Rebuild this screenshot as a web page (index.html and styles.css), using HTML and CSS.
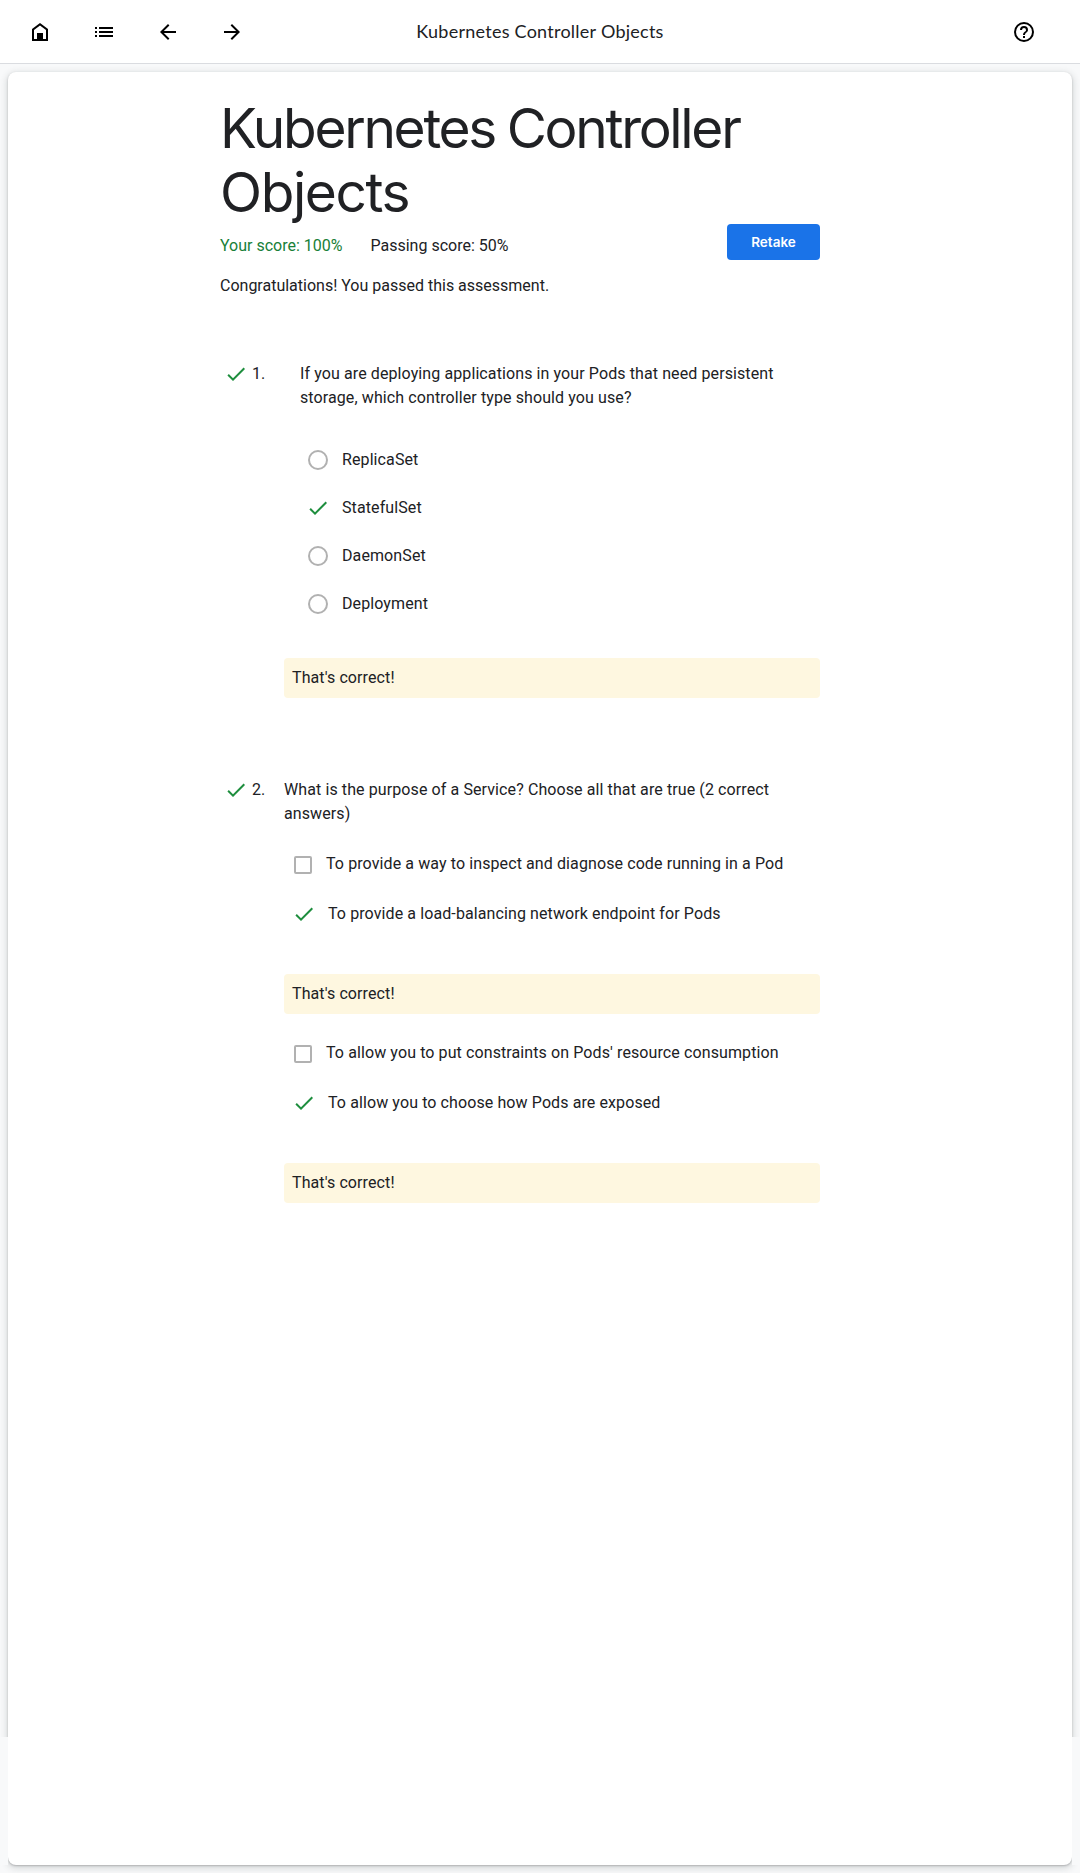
FILE: index.html
```html
<!DOCTYPE html>
<html lang="en">
<head>
<meta charset="utf-8">
<title>Kubernetes Controller Objects</title>
<link rel="stylesheet" href="styles.css">
</head>
<body>
<svg class="defs" aria-hidden="true">
  <symbol id="check" viewBox="0 0 24 24"><path d="M9 16.17 4.83 12l-1.42 1.41L9 19 21 7l-1.41-1.41z"/></symbol>
</svg>
<header class="bar">
  <nav class="nav">
    <svg class="icon" viewBox="0 0 24 24"><path d="M12 3 4 9v12h16V9zm6 16H6v-9l6-4.5 6 4.5z"/><path d="M9 13h6v7H9z"/></svg>
    <svg class="icon" viewBox="0 0 24 24"><path d="M3 7h2v2H3zm0 4h2v2H3zm0 4h2v2H3zM7 7h14v2H7zm0 4h14v2H7zm0 4h14v2H7z"/></svg>
    <svg class="icon" viewBox="0 0 24 24"><path d="M20 11H7.83l5.59-5.59L12 4l-8 8 8 8 1.41-1.41L7.83 13H20z"/></svg>
    <svg class="icon" viewBox="0 0 24 24"><path d="m12 4-1.41 1.41L16.17 11H4v2h12.17l-5.58 5.59L12 20l8-8z"/></svg>
  </nav>
  <div class="bar-title">Kubernetes Controller Objects</div>
  <svg class="icon" viewBox="0 0 24 24"><path d="M11 18h2v-2h-2zm1-16a10 10 0 1 0 0 20 10 10 0 0 0 0-20zm0 18a8 8 0 1 1 0-16 8 8 0 0 1 0 16zm0-14a4 4 0 0 0-4 4h2a2 2 0 1 1 4 0c0 2-3 1.750-3 5h2c0-2.250 3-2.500 3-5a4 4 0 0 0-4-4z"/></svg>
</header>
<main class="card">
  <div class="content">
    <h1 class="title">Kubernetes Controller <span class="title-end">Objects</span></h1>
    <div class="summary">
      <span class="score">Your score: 100%</span>
      <span class="passing">Passing score: 50%</span>
      <button class="retake">Retake</button>
    </div>
    <p class="result">Congratulations! You passed this assessment.</p>

    <section class="question">
      <svg class="check"><use href="#check"/></svg>
      <span class="number">1.</span>
      <div class="body">
        <p class="prompt inset">If you are deploying applications in your Pods that need persistent storage, which controller type should you use?</p>
        <ul class="radios">
          <li><i class="radio"></i>ReplicaSet</li>
          <li><svg class="check"><use href="#check"/></svg>StatefulSet</li>
          <li><i class="radio"></i>DaemonSet</li>
          <li><i class="radio"></i>Deployment</li>
        </ul>
        <p class="note">That's correct!</p>
      </div>
    </section>

    <section class="question">
      <svg class="check"><use href="#check"/></svg>
      <span class="number">2.</span>
      <div class="body">
        <p class="prompt">What is the purpose of a Service? Choose all that are true (2 correct answers)</p>
        <ul class="boxes">
          <li><i class="box"></i>To provide a way to inspect and diagnose code running in a Pod</li>
          <li><svg class="check"><use href="#check"/></svg>To provide a load-balancing network endpoint for Pods</li>
        </ul>
        <p class="note">That's correct!</p>
        <ul class="boxes">
          <li><i class="box"></i>To allow you to put constraints on Pods' resource consumption</li>
          <li><svg class="check"><use href="#check"/></svg>To allow you to choose how Pods are exposed</li>
        </ul>
        <p class="note">That's correct!</p>
      </div>
    </section>
  </div>
</main>
</body>
</html>
```
FILE: styles.css
```css
* { box-sizing: border-box; margin: 0; padding: 0; }
body {
  min-height: 1873px;
  background: #f8f9fa;
  color: #202124;
  font: 16px/24px Roboto, sans-serif;
}
.defs { position: absolute; width: 0; height: 0; }
.bar {
  display: grid;
  grid-template-columns: 300px 1fr 300px;
  align-items: center;
  height: 64px;
  padding: 0 28px;
  background: #fff;
  border-bottom: 1px solid #dadce0;
}
.bar > .icon { justify-self: end; margin-right: 16px; }
.nav { display: flex; gap: 40px; }
.icon { width: 24px; height: 24px; fill: #000; }
.bar-title {
  padding-bottom: 2px;
  text-align: center;
  font: 18px/24px Lato, sans-serif;
  letter-spacing: 0.25px;
}
.card {
  position: relative;
  height: 1793px;
  margin: 8px 8px 0;
  padding-top: 24px;
  background: #fff;
  border-radius: 8px;
  box-shadow: 0 1px 2px rgba(60, 64, 67, .3), 0 2px 6px 2px rgba(60, 64, 67, .15);
}
/* the side shadows end above the foot of the card */
.card::before,
.card::after {
  content: "";
  position: absolute;
  top: 1665px;
  bottom: 0;
  width: 8px;
  background: #f8f9fa;
}
.card::before { left: -8px; }
.card::after { right: -8px; }
.content { width: 600px; margin-left: 212px; }
.title {
  font: 400 55px/64px Inter, sans-serif;
  letter-spacing: -2.3px;
  word-spacing: -1.5px;
}
.title-end { letter-spacing: -1.4px; }
.summary { display: flex; gap: 28px; height: 40px; padding-top: 10px; }
.score { color: #188038; }
.retake {
  width: 93px;
  height: 36px;
  margin: -10px 0 0 auto;
  border: 0;
  border-radius: 4px;
  background: #1a73e8;
  color: #fff;
  font: 600 13.5px/36px Inter, sans-serif;
}
.result { margin-top: 10px; }
.question {
  display: flex;
  margin-top: 64px;
  padding-left: 4px;
  letter-spacing: 0.1px;
}
.question + .question { margin-top: 80px; }
.check { flex: none; width: 24px; height: 24px; fill: #1e8e3e; }
.number { width: 32px; margin-left: 4px; }
.body { flex: 1; }
.inset { padding-left: 16px; }
ul { list-style: none; }
li { display: flex; gap: 12px; }
.radios { display: grid; gap: 24px; padding: 38px 0 42px 22px; }
.radio { width: 20px; height: 20px; margin: 2px 2px 0; border: 2px solid #b1b1b1; border-radius: 50%; }
.boxes { display: grid; gap: 26px; padding: 26px 0 48px 8px; }
.note + .boxes { padding-top: 27px; }
.box { width: 18px; height: 18px; margin: 4px 2px 0; border: 2px solid #b1b1b1; border-radius: 2px; }
.note { height: 40px; padding: 8px; border-radius: 4px; background: #fef7e0; }
```
